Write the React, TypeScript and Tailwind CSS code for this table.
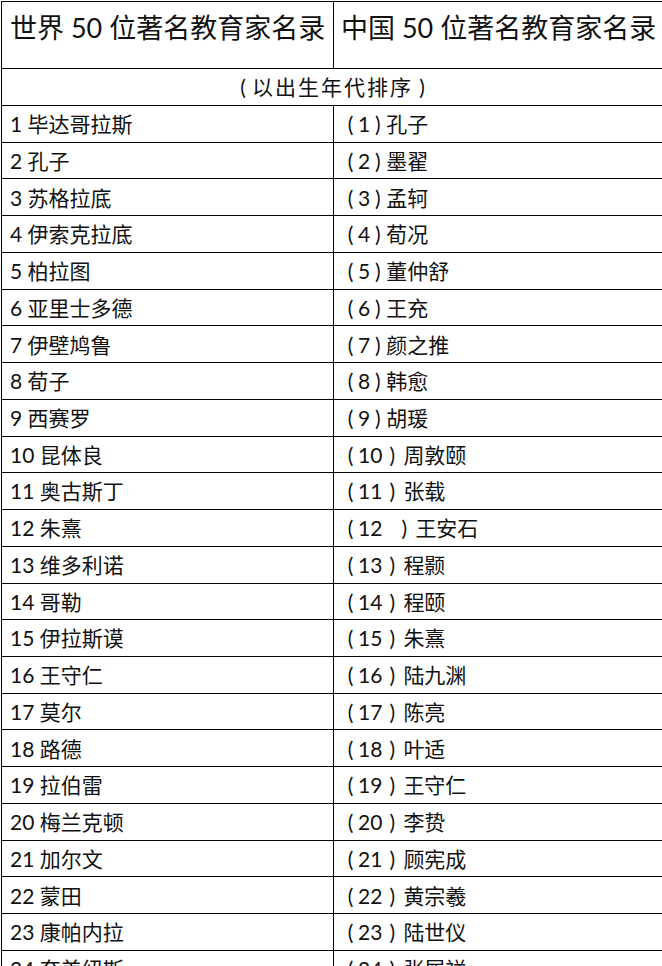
import React from "react"

const world = [
  "毕达哥拉斯", "孔子", "苏格拉底", "伊索克拉底", "柏拉图", "亚里士多德", "伊壁鸠鲁", "荀子",
  "西赛罗", "昆体良", "奥古斯丁", "朱熹", "维多利诺", "哥勒", "伊拉斯谟", "王守仁",
  "莫尔", "路德", "拉伯雷", "梅兰克顿", "加尔文", "蒙田", "康帕内拉", "夸美纽斯",
]

const china = [
  "孔子", "墨翟", "孟轲", "荀况", "董仲舒", "王充", "颜之推", "韩愈",
  "胡瑗", "周敦颐", "张载", "王安石", "程颢", "程颐", "朱熹", "陆九渊",
  "陈亮", "叶适", "王守仁", "李贽", "顾宪成", "黄宗羲", "陆世仪", "张履祥",
]

function Paren({ ch, w = "w-[15px]" }: { ch: string; w?: string }) {
  return <span className={`inline-block text-center ${w}`}>{ch}</span>
}

export default function App() {
  return (
    <div
      className="w-[662px] h-[966px] overflow-hidden bg-white pt-[1px] pl-[1px] text-[#111]"
      style={{ fontFamily: 'Lato, "Noto Sans CJK SC", sans-serif' }}
    >
      <div className="w-[664px] border-t border-l border-black">
        {/* Title row */}
        <div className="grid grid-cols-[332px_1fr] h-[67px] border-b border-black">
          <div className="border-r border-black pl-[8px] pt-[8px] text-[27px] leading-[36px] whitespace-nowrap">
            世界 50 位著名教育家名录
          </div>
          <div className="pl-[7px] pt-[8px] text-[27px] leading-[36px] whitespace-nowrap">
            中国 50 位著名教育家名录
          </div>
        </div>

        {/* Subtitle */}
        <div className="h-[37px] border-b border-black flex items-center justify-center text-[21px] pr-[2px]">
          <Paren ch="(" w="w-[18px]" />
          <span className="tracking-[2px]">以出生年代排序</span>
          <Paren ch=")" w="w-[18px]" />
        </div>

        {world.map((name, i) => (
          <div key={i} className="grid grid-cols-[332px_1fr] h-[36.74px] border-b border-black text-[21px]">
            <div className="border-r border-black pl-[8px] flex items-center whitespace-nowrap">
              {i + 1} {name}
            </div>
            <div className="pl-[9px] flex items-center whitespace-nowrap">
              <Paren ch="(" />
              <span>{i + 1}</span>
              {i === 11 ? <span className="w-[12px] inline-block" /> : null}
              <Paren ch=")" w={i >= 9 ? "w-[20px]" : "w-[15px]"} />
              <span className="ml-[1px]">{china[i]}</span>
            </div>
          </div>
        ))}
      </div>
    </div>
  )
}
